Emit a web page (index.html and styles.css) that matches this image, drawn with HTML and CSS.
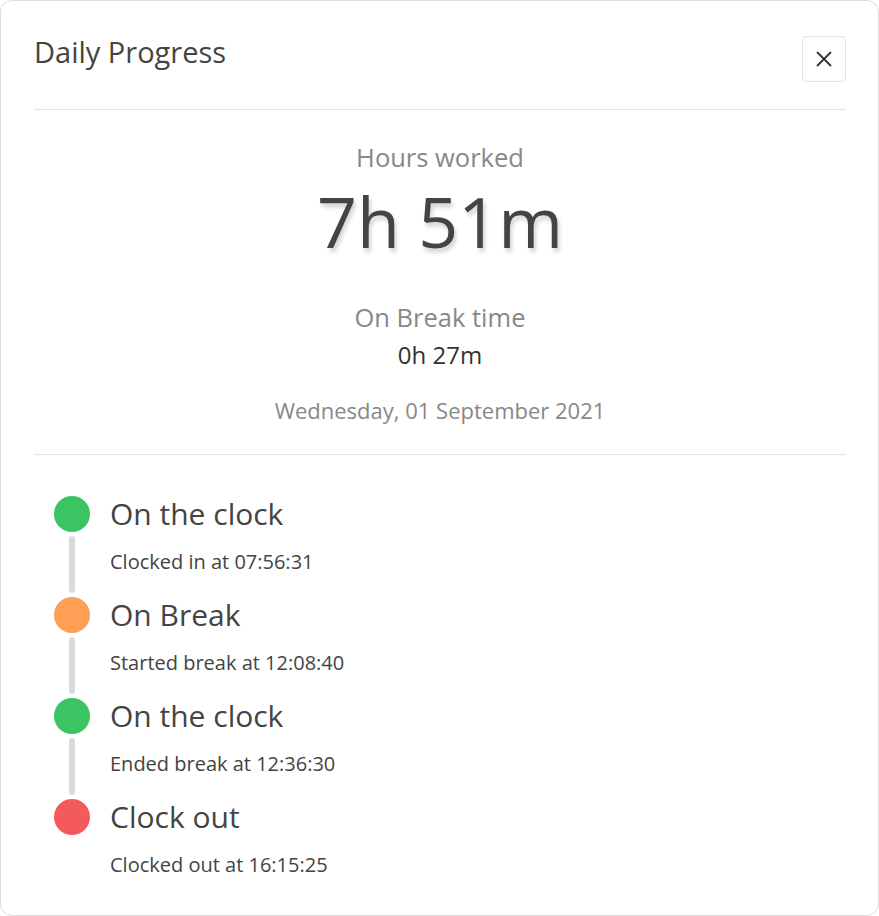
FILE: index.html
```html
<!DOCTYPE html>
<html>
<head>
<meta charset="utf-8">
<link rel="stylesheet" href="styles.css">
</head>
<body>
<div class="card">
  <div class="header">
    <h1 class="title">Daily Progress</h1>
    <button class="close" aria-label="Close">
      <svg width="20" height="20" viewBox="0 0 20 20"><path d="M3.5 3.5 L16.5 16.5 M16.5 3.5 L3.5 16.5" stroke="#333" stroke-width="1.8" stroke-linecap="round" fill="none"/></svg>
    </button>
  </div>
  <div class="summary">
    <div class="label">Hours worked</div>
    <div class="big">7h 51m</div>
    <div class="label break-label">On Break time</div>
    <div class="small-value">0h 27m</div>
    <div class="date">Wednesday, 01 September 2021</div>
  </div>
  <div class="timeline">
    <div class="item">
      <span class="dot green"></span>
      <div class="item-title">On the clock</div>
      <span class="line"></span>
      <div class="item-desc">Clocked in at 07:56:31</div>
    </div>
    <div class="item">
      <span class="dot orange"></span>
      <div class="item-title">On Break</div>
      <span class="line"></span>
      <div class="item-desc">Started break at 12:08:40</div>
    </div>
    <div class="item">
      <span class="dot green"></span>
      <div class="item-title">On the clock</div>
      <span class="line"></span>
      <div class="item-desc">Ended break at 12:36:30</div>
    </div>
    <div class="item last">
      <span class="dot red"></span>
      <div class="item-title">Clock out</div>
      <span class="line"></span>
      <div class="item-desc">Clocked out at 16:15:25</div>
    </div>
  </div>
</div>
</body>
</html>
```
FILE: styles.css
```css
* { box-sizing: border-box; }
html, body { margin: 0; background: #fff; }
body { font-family: "Open Sans", "Noto Sans", sans-serif; color: #444; }
.card {
  width: 879px;
  height: 916px;
  border: 1px solid #dcdcdc;
  border-radius: 12px;
  padding: 0 32px 0 33px;
}
.header {
  display: flex;
  justify-content: space-between;
  align-items: flex-start;
  height: 109px;
  border-bottom: 1px solid #e2e2e2;
  padding-top: 35px;
}
.title {
  margin: 0;
  font-weight: 400;
  font-size: 29px;
  line-height: 36px;
  color: #444;
  margin-top: -2px;
}
.close {
  width: 44px;
  height: 46px;
  border: 1px solid #dee2e6;
  border-radius: 4px;
  background: #fff;
  display: flex;
  align-items: center;
  justify-content: center;
  padding: 0;
}
.summary {
  display: flex;
  flex-direction: column;
  align-items: center;
  border-bottom: 1px solid #e2e2e2;
  padding-top: 30px;
  height: 345px;
}
.label {
  font-size: 25.5px;
  line-height: 34px;
  color: #888;
}
.big {
  font-size: 70px;
  line-height: 94px;
  color: #444;
  text-shadow: 2px 4px 4px rgba(0,0,0,0.18);
}
.break-label { margin-top: 32px; }
.small-value {
  margin-top: 5px;
  font-size: 24px;
  line-height: 32px;
  color: #333;
}
.date {
  margin-top: 24px;
  font-size: 22px;
  line-height: 30px;
  color: #888;
}
.timeline {
  padding: 41px 0 0 20px;
}
.item {
  display: grid;
  grid-template-columns: 36px 1fr;
  grid-template-rows: 36px 65px;
  column-gap: 20px;
}
.dot {
  width: 36px;
  height: 36px;
  border-radius: 50%;
  display: block;
}
.green { background: #3cc463; }
.orange { background: #ff9f55; }
.red { background: #f55a5a; }
.item-title {
  font-size: 30px;
  line-height: 36px;
  color: #444;
}
.line {
  justify-self: center;
  width: 6px;
  margin: 4px 0 4px;
  background: #dadada;
  border-radius: 3px;
}
.last .line { visibility: hidden; }
.item-desc {
  font-size: 20px;
  line-height: 26px;
  padding-top: 17px;
  color: #444;
}
```
